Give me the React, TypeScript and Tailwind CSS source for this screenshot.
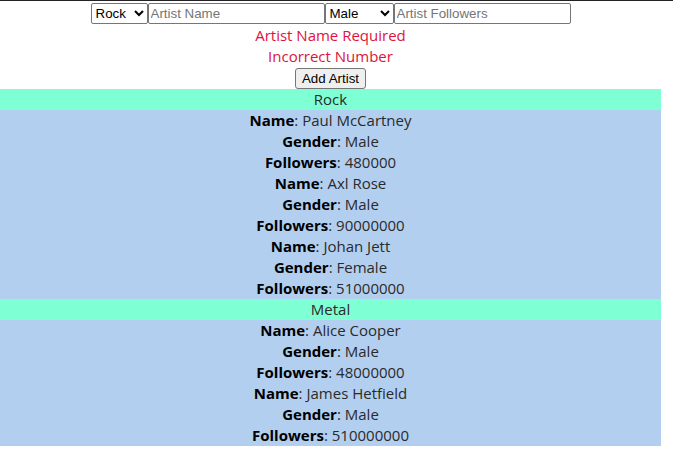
import { useState } from 'react';

type Artist = {
  name: string;
  gender: string;
  followers: number;
};

const GENRES: { genre: string; artists: Artist[] }[] = [
  {
    genre: 'Rock',
    artists: [
      { name: 'Paul McCartney', gender: 'Male', followers: 480000 },
      { name: 'Axl Rose', gender: 'Male', followers: 90000000 },
      { name: 'Johan Jett', gender: 'Female', followers: 51000000 },
    ],
  },
  {
    genre: 'Metal',
    artists: [
      { name: 'Alice Cooper', gender: 'Male', followers: 48000000 },
      { name: 'James Hetfield', gender: 'Male', followers: 510000000 },
    ],
  },
];

const controlFont = "font-['Liberation_Sans',Arial,sans-serif] text-[13.33px]";

function ArtistRow({ label, value }: { label: string; value: string | number }) {
  return (
    <div className="leading-[21px]">
      <b className="font-bold text-black">{label}</b>: {value}
    </div>
  );
}

function App() {
  const [genre, setGenre] = useState('Rock');
  const [gender, setGender] = useState('Male');
  const [name, setName] = useState('');
  const [followers, setFollowers] = useState('');

  return (
    <div className="min-h-[457px] w-[673px] border-t border-[#222] bg-white font-['Open_Sans','Noto_Sans',sans-serif] text-[15px] text-[#2a2a2a]">
      <div className="w-[661px] text-center">
        {/* 입력 폼 */}
        <div className="flex justify-center pt-[2px]">
          <select
            value={genre}
            onChange={e => setGenre(e.target.value)}
            className={`${controlFont} h-[21px] w-[57px] rounded-[2px] border border-[#767676] bg-white text-black`}
          >
            <option>Rock</option>
            <option>Metal</option>
          </select>
          <input
            value={name}
            onChange={e => setName(e.target.value)}
            placeholder="Artist Name"
            className={`${controlFont} h-[21px] w-[177px] rounded-[2px] border border-[#767676] bg-white px-[2px] text-black placeholder:text-[#757575]`}
          />
          <select
            value={gender}
            onChange={e => setGender(e.target.value)}
            className={`${controlFont} h-[21px] w-[69px] rounded-[2px] border border-[#767676] bg-white text-black`}
          >
            <option>Male</option>
            <option>Female</option>
          </select>
          <input
            value={followers}
            onChange={e => setFollowers(e.target.value)}
            placeholder="Artist Followers"
            className={`${controlFont} h-[21px] w-[177px] rounded-[2px] border border-[#767676] bg-white px-[2px] text-black placeholder:text-[#757575]`}
          />
        </div>

        {/* 에러 메시지 */}
        <div className="mt-[1px] text-[#dc143c]">
          <div className="leading-[21px]">Artist Name Required</div>
          <div className="leading-[21px]">Incorrect Number</div>
        </div>

        <button
          type="button"
          className={`${controlFont} mx-auto mt-[1px] block h-[21px] rounded-[3px] border border-[#767676] bg-[#efefef] px-[6px] leading-none text-black`}
        >
          Add Artist
        </button>

        {/* 장르별 아티스트 목록 */}
        <div className="mt-[0px]">
          {GENRES.map(group => (
            <div key={group.genre}>
              <div className="bg-[#7fffd4] leading-[21px]">{group.genre}</div>
              <div className="bg-[#b3cff0]">
                {group.artists.map(artist => (
                  <div key={artist.name}>
                    <ArtistRow label="Name" value={artist.name} />
                    <ArtistRow label="Gender" value={artist.gender} />
                    <ArtistRow label="Followers" value={artist.followers} />
                  </div>
                ))}
              </div>
            </div>
          ))}
        </div>
      </div>
    </div>
  );
}

export default App;
